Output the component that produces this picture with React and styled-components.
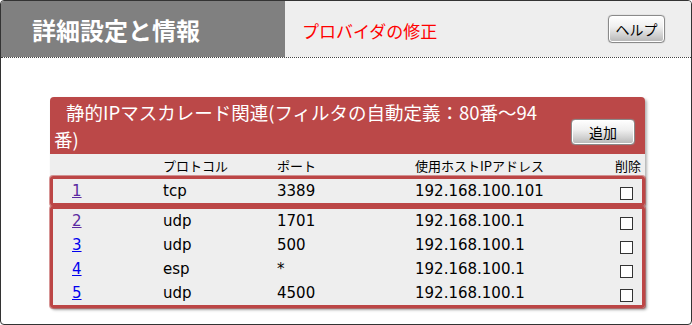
import React from 'react';
import styled, { createGlobalStyle } from 'styled-components';

const GlobalStyle = createGlobalStyle`
  html, body { margin: 0; padding: 0; background: #fff; }
  body { font-family: "DejaVu Sans", "Noto Sans CJK JP", sans-serif; }
`;

const Frame = styled.div`
  width: 692px;
  height: 325px;
  box-sizing: border-box;
  border: 1px solid #333;
  border-radius: 4px;
  overflow: hidden;
  display: flex;
  flex-direction: column;
`;

const TopBar = styled.div`
  display: flex;
  height: 56px;
  border-bottom: 1px dotted #444;
`;

const TitleBox = styled.div`
  width: 284px;
  background: #808080;
  display: flex;
  align-items: center;
  padding-left: 31px;
  box-sizing: border-box;
  color: #fff;
  font-family: "Noto Sans CJK JP", sans-serif;
  font-weight: 700;
  font-size: 24px;
`;

const SubBar = styled.div`
  flex: 1;
  background: #eeeeee;
  display: flex;
  align-items: center;
  justify-content: space-between;
  padding: 0 26px 0 17px;
`;

const SubTitle = styled.div`
  color: #ff0000;
  font-family: "Noto Sans CJK JP", sans-serif;
  font-size: 17px;
  padding-top: 2px;
`;

const Button = styled.button`
  width: ${p => p.w}px;
  height: ${p => p.h}px;
  border: 1px solid #8a8a8a;
  border-radius: 4px;
  background: linear-gradient(#ffffff 0%, #f0f0f0 40%, #cfcfcf 75%, #b5b5b5 100%);
  box-shadow: inset 0 0 0 1px #fff, 0 0 1px #999;
  font-family: "Noto Sans CJK JP", sans-serif;
  font-size: 14px;
  color: #000;
  padding: 0;
  cursor: pointer;
`;

const Content = styled.div`
  flex: 1;
  padding: 39px 0 0 49px;
`;

const Panel = styled.div`
  width: 595px;
  background: #eeeeee;
  border-radius: 4px 4px 3px 3px;
  box-shadow: 2px 2px 3px rgba(0, 0, 0, 0.3);
`;

const PanelHead = styled.div`
  background: #bb4848;
  color: #fff;
  font-family: "Noto Sans CJK JP", sans-serif;
  font-size: 18.5px;
  line-height: 27px;
  padding: 2px 10px 1px 4px;
  min-height: 53px;
  border-radius: 4px 4px 0 0;
`;

const AddWrap = styled.div`
  float: right;
  margin: 18px 0 0 16px;
`;

const Line = styled.div`
  white-space: nowrap;
  padding-left: ${p => p.indent || 0}px;
`;

const Grid = styled.div`
  display: grid;
  grid-template-columns: 91px 114px 138px 1fr 31px;
  align-items: center;
`;

const HeadRow = styled(Grid)`
  height: 22px;
  padding: 0 4px 0 22px;
  font-family: "Noto Sans CJK JP", sans-serif;
  font-size: 13px;
  color: #000;
`;

const Group = styled.div`
  position: relative;
  border: 3px solid #bc4646;
  border-radius: 3px;
  box-shadow: 0 0 0 1px rgba(188, 70, 70, 0.55), 1px 1px 2px rgba(0, 0, 0, 0.25);
`;

const Row = styled(Grid)`
  height: 24px;
  padding: 0 1px 0 19px;
  font-size: 15px;
  color: #000;
`;

const Num = styled.a`
  color: ${p => (p.visited ? '#5a2aa0' : '#0000ee')};
  text-decoration: underline;
  font-size: 15px;
`;

const Del = styled.span`
  text-align: ${p => p.right ? 'right' : 'center'};
`;

const Check = styled.input`
  appearance: none;
  width: 13px;
  height: 13px;
  margin: 4px 0 0 2px;
  border: 1px solid #333;
  background: #fff;
  border-radius: 0;
  vertical-align: middle;
`;

const rules = [
  { id: 1, proto: 'tcp', port: '3389', ip: '192.168.100.101', visited: true },
  { id: 2, proto: 'udp', port: '1701', ip: '192.168.100.1', visited: true },
  { id: 3, proto: 'udp', port: '500', ip: '192.168.100.1' },
  { id: 4, proto: 'esp', port: '*', ip: '192.168.100.1' },
  { id: 5, proto: 'udp', port: '4500', ip: '192.168.100.1' },
];

function RuleRow({ r }) {
  return (
    <Row>
      <span><Num href="#" visited={r.visited}>{r.id}</Num></span>
      <span>{r.proto}</span>
      <span>{r.port}</span>
      <span>{r.ip}</span>
      <Del><Check type="checkbox" /></Del>
    </Row>
  );
}

export default function App() {
  return (
    <>
      <GlobalStyle />
      <Frame>
        <TopBar>
          <TitleBox>詳細設定と情報</TitleBox>
          <SubBar>
            <SubTitle>プロバイダの修正</SubTitle>
            <Button w={57} h={28}>ヘルプ</Button>
          </SubBar>
        </TopBar>
        <Content>
          <Panel>
            <PanelHead>
              <AddWrap><Button w={64} h={26}>追加</Button></AddWrap>
              <Line indent={12}>静的IPマスカレード関連(フィルタの自動定義：80番～94</Line>
              <Line>番)</Line>
            </PanelHead>
            <HeadRow>
              <span></span>
              <span>プロトコル</span>
              <span>ポート</span>
              <span>使用ホストIPアドレス</span>
              <Del right>削除</Del>
            </HeadRow>
            <Group>
              <RuleRow r={rules[0]} />
            </Group>
            <Group>
              {rules.slice(1).map(r => <RuleRow key={r.id} r={r} />)}
            </Group>
          </Panel>
        </Content>
      </Frame>
    </>
  );
}
